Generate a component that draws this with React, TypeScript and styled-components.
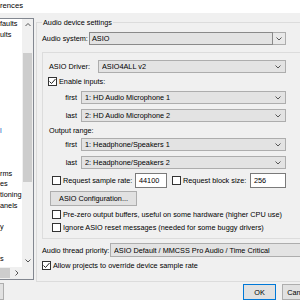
import styled, { createGlobalStyle } from "styled-components";

const GlobalStyle = createGlobalStyle`
  html, body {
    margin: 0;
    padding: 0;
    background: #f0f0f0;
  }
  body {
    font-family: "Liberation Sans", Arial, sans-serif;
    font-size: 7.3px;
    color: #000;
  }
`;

const Screen = styled.div`
  width: 300px;
  height: 300px;
  overflow: hidden;
  display: flex;
  flex-direction: column;
  background: #f0f0f0;
`;

const TitleBar = styled.div`
  height: 13px;
  flex-shrink: 0;
  background: #fff;
  line-height: 12px;
  font-size: 7.7px;
  white-space: nowrap;
`;

const Body = styled.div`
  flex: 1;
  min-height: 0;
  display: flex;
`;

const Sidebar = styled.div`
  width: 34px;
  flex-shrink: 0;
  display: flex;
  flex-direction: column;
`;

const Tree = styled.div`
  margin-top: 5px;
  height: 263px;
  box-sizing: border-box;
  border: 1px solid #828790;
  border-left: none;
  background: #fff;
  display: grid;
  grid-template-columns: 1fr 11px;
  grid-template-rows: 1fr 12px;
`;

const TreeList = styled.div`
  overflow: hidden;
`;

const TreeItem = styled.div<{ $active?: boolean }>`
  height: 10.7px;
  line-height: 10.7px;
  white-space: nowrap;
  color: ${(p) => (p.$active ? "#0a5fc4" : "#000")};
`;

const VScroll = styled.div`
  background: #f0f0f0;
  display: flex;
  flex-direction: column;
`;

const ScrollArrow = styled.div<{ $w?: number }>`
  height: 12px;
  width: ${(p) => (p.$w ? `${p.$w}px` : "auto")};
  flex-shrink: 0;
  display: flex;
  align-items: center;
  justify-content: center;
`;

const ScrollTrack = styled.div`
  flex: 1;
`;

const VThumb = styled.div`
  margin: 22px 1px 0;
  height: 129px;
  background: #cdcdcd;
`;

const HScroll = styled.div`
  background: #f0f0f0;
  display: flex;
`;

const HThumb = styled.div`
  width: 10px;
  margin: 1px 0;
  background: #cdcdcd;
`;

const Corner = styled.div`
  background: #f0f0f0;
`;

const SideButton = styled.div`
  margin-top: 3px;
  margin-left: -26px;
  width: 30px;
  height: 17px;
  box-sizing: border-box;
  border: 1px solid #adadad;
  background: #e1e1e1;
`;

const Main = styled.div`
  flex: 1;
  min-width: 0;
  padding-left: 2px;
  display: flex;
  flex-direction: column;
`;

const GroupBox = styled.div`
  position: relative;
  margin-top: 9px;
  width: 320px;
  height: 261px;
  box-sizing: border-box;
  border: 1px solid #dcdcdc;
  border-right: none;
  padding-left: 5px;
  display: flex;
  flex-direction: column;
`;

const GroupCaption = styled.span`
  position: absolute;
  top: -6px;
  left: 5px;
  padding: 0 1px;
  line-height: 11px;
  background: #f0f0f0;
  white-space: nowrap;
`;

const InnerBox = styled.div`
  margin-top: 7px;
  height: 187px;
  box-sizing: border-box;
  border: 1px solid #dcdcdc;
  border-right: none;
  padding-left: 6px;
  display: flex;
  flex-direction: column;
`;

const Row = styled.div<{ $mt: number; $h: number; $ml?: number }>`
  display: flex;
  align-items: center;
  margin-top: ${(p) => p.$mt}px;
  margin-left: ${(p) => p.$ml ?? 0}px;
  height: ${(p) => p.$h}px;
  white-space: nowrap;
`;

const Label = styled.span<{ $w?: number; $right?: boolean; $gap?: number }>`
  flex-shrink: 0;
  width: ${(p) => (p.$w ? `${p.$w}px` : "auto")};
  margin-right: ${(p) => p.$gap ?? 0}px;
  text-align: ${(p) => (p.$right ? "right" : "left")};
  white-space: nowrap;
`;

const Select = styled.div<{ $w: number }>`
  flex-shrink: 0;
  width: ${(p) => p.$w}px;
  height: 100%;
  box-sizing: border-box;
  border: 1px solid #adadad;
  background: #e3e3e3;
  display: flex;
  align-items: center;
  padding: 0 4px 0 3px;
`;

const SelectText = styled.span`
  flex: 1;
  overflow: hidden;
  white-space: nowrap;
`;

const EditCombo = styled.div<{ $w: number }>`
  flex-shrink: 0;
  width: ${(p) => p.$w}px;
  height: 100%;
  display: flex;
`;

const EditField = styled.div`
  flex: 1;
  box-sizing: border-box;
  border: 1px solid #8a8a8a;
  background: #e3e3e3;
  padding-left: 2px;
  display: flex;
  align-items: center;
`;

const EditArrow = styled.div`
  width: 13px;
  box-sizing: border-box;
  border: 1px solid #adadad;
  border-left: none;
  background: #e9e9e9;
  display: flex;
  align-items: center;
  justify-content: center;
`;

const TextInput = styled.div<{ $w: number }>`
  flex-shrink: 0;
  width: ${(p) => p.$w}px;
  height: 100%;
  box-sizing: border-box;
  border: 1px solid #7a7a7a;
  background: #fff;
  padding-left: 3px;
  display: flex;
  align-items: center;
`;

const Box = styled.span`
  flex-shrink: 0;
  width: 9px;
  height: 9px;
  box-sizing: border-box;
  border: 1px solid #333;
  background: #fff;
  margin-right: 2px;
  display: flex;
  align-items: center;
  justify-content: center;
`;

const Button = styled.div<{ $w: number; $default?: boolean }>`
  flex-shrink: 0;
  width: ${(p) => p.$w}px;
  height: 100%;
  box-sizing: border-box;
  border: 1px solid ${(p) => (p.$default ? "#0078d7" : "#adadad")};
  background: #e1e1e1;
  display: flex;
  align-items: center;
  justify-content: center;
  white-space: nowrap;
  overflow: hidden;
`;

const Footer = styled.div`
  margin-top: 2px;
  height: 16px;
  padding-left: 207px;
  display: flex;
  gap: 6px;
`;

const Chevron = ({ dir = "down" }: { dir?: "down" | "up" | "right" }) => {
  const points =
    dir === "down" ? "0.5,0.5 3,3 5.5,0.5" : dir === "up" ? "0.5,3 3,0.5 5.5,3" : "0.5,0.5 3,3 0.5,5.5";
  const w = dir === "right" ? 4 : 6;
  const h = dir === "right" ? 6 : 4;
  return (
    <svg width={w} height={h} viewBox={`0 0 ${w} ${h}`}>
      <polyline points={points} fill="none" stroke="#555" strokeWidth="1" />
    </svg>
  );
};

const Check = ({ checked }: { checked?: boolean }) => (
  <Box>
    {checked && (
      <svg width="7" height="7" viewBox="0 0 7 7">
        <polyline points="0.5,3.5 2.5,5.5 6.5,1" fill="none" stroke="#222" strokeWidth="1" />
      </svg>
    )}
  </Box>
);

const Dropdown = ({ w, value }: { w: number; value: string }) => (
  <Select $w={w}>
    <SelectText>{value}</SelectText>
    <Chevron />
  </Select>
);

const treeItems: { text: string; active?: boolean }[] = [
  { text: "faults" },
  { text: "ults" },
  { text: "" },
  { text: "" },
  { text: "" },
  { text: "" },
  { text: "" },
  { text: "" },
  { text: "" },
  { text: "" },
  { text: "l", active: true },
  { text: "" },
  { text: "" },
  { text: "" },
  { text: "rms" },
  { text: "es" },
  { text: "tioning" },
  { text: "anels" },
  { text: "" },
  { text: "y" },
  { text: "" },
  { text: "" },
  { text: "s" },
];

export default function App() {
  return (
    <>
      <GlobalStyle />
      <Screen>
        <TitleBar>rences</TitleBar>
        <Body>
          <Sidebar>
            <Tree>
              <TreeList>
                {treeItems.map((item, i) => (
                  <TreeItem key={i} $active={item.active}>
                    {item.text}
                  </TreeItem>
                ))}
              </TreeList>
              <VScroll>
                <ScrollArrow>
                  <Chevron dir="up" />
                </ScrollArrow>
                <ScrollTrack>
                  <VThumb />
                </ScrollTrack>
                <ScrollArrow>
                  <Chevron />
                </ScrollArrow>
              </VScroll>
              <HScroll>
                <HThumb />
                <ScrollTrack />
                <ScrollArrow $w={11}>
                  <Chevron dir="right" />
                </ScrollArrow>
              </HScroll>
              <Corner />
            </Tree>
            <SideButton />
          </Sidebar>

          <Main>
            <GroupBox>
              <GroupCaption>Audio device settings</GroupCaption>
              <Row $mt={9} $h={13}>
                <Label $w={47}>Audio system:</Label>
                <EditCombo $w={197}>
                  <EditField>ASIO</EditField>
                  <EditArrow>
                    <Chevron />
                  </EditArrow>
                </EditCombo>
              </Row>

              <InnerBox>
                <Row $mt={7} $h={13}>
                  <Label $w={49}>ASIO Driver:</Label>
                  <Dropdown w={188} value="ASIO4ALL v2" />
                </Row>
                <Row $mt={4} $h={9} $ml={-1}>
                  <Check checked />
                  <Label>Enable inputs:</Label>
                </Row>
                <Row $mt={5} $h={13}>
                  <Label $w={28} $right $gap={4}>first</Label>
                  <Dropdown w={205} value="1: HD Audio Microphone 1" />
                </Row>
                <Row $mt={5} $h={13}>
                  <Label $w={28} $right $gap={4}>last</Label>
                  <Dropdown w={205} value="2: HD Audio Microphone 2" />
                </Row>
                <Row $mt={3} $h={11}>
                  <Label>Output range:</Label>
                </Row>
                <Row $mt={2} $h={13}>
                  <Label $w={28} $right $gap={4}>first</Label>
                  <Dropdown w={205} value="1: Headphone/Speakers 1" />
                </Row>
                <Row $mt={5} $h={13}>
                  <Label $w={28} $right $gap={4}>last</Label>
                  <Dropdown w={205} value="2: Headphone/Speakers 2" />
                </Row>
                <Row $mt={4} $h={15} $ml={3}>
                  <Check />
                  <Label $w={72}>Request sample rate:</Label>
                  <TextInput $w={32}>44100</TextInput>
                  <Label $w={5} />
                  <Check />
                  <Label $w={67}>Request block size:</Label>
                  <TextInput $w={36}>256</TextInput>
                </Row>
                <Row $mt={3} $h={15} $ml={1}>
                  <Button $w={87}>ASIO Configuration...</Button>
                </Row>
                <Row $mt={4} $h={9} $ml={3}>
                  <Check />
                  <Label>Pre-zero output buffers, useful on some hardware (higher CPU use)</Label>
                </Row>
                <Row $mt={4} $h={9} $ml={3}>
                  <Check />
                  <Label>Ignore ASIO reset messages (needed for some buggy drivers)</Label>
                </Row>
              </InnerBox>

              <Row $mt={4} $h={14}>
                <Label $w={68}>Audio thread priority:</Label>
                <Dropdown w={220} value="ASIO Default / MMCSS Pro Audio / Time Critical" />
              </Row>
              <Row $mt={4} $h={9}>
                <Check checked />
                <Label>Allow projects to override device sample rate</Label>
              </Row>
            </GroupBox>

            <Footer>
              <Button $w={33} $default>OK</Button>
              <Button $w={33}>Cancel</Button>
            </Footer>
          </Main>
        </Body>
      </Screen>
    </>
  );
}
